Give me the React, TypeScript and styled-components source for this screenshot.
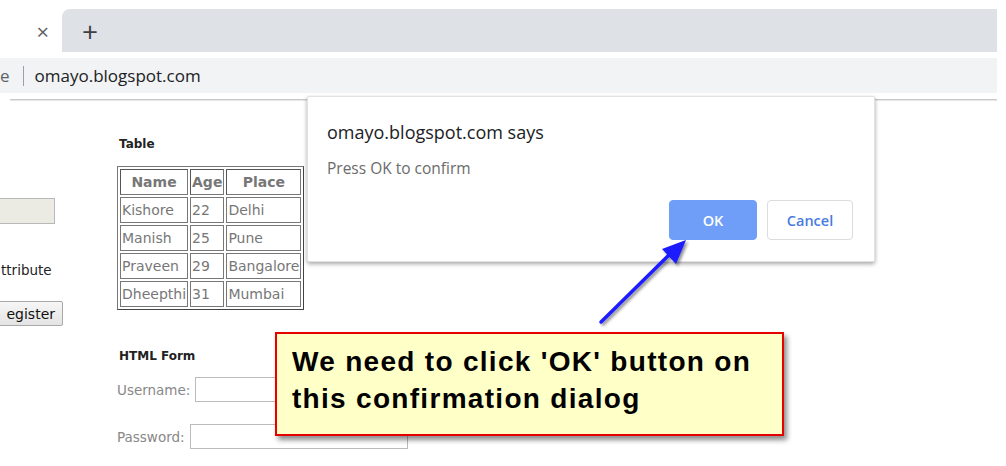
import React from "react";
import styled, { createGlobalStyle } from "styled-components";

const GlobalStyle = createGlobalStyle`
  html, body { margin: 0; padding: 0; background: #ffffff; }
  body { width: 1006px; height: 466px; overflow: hidden; }
`;

const Window = styled.div`
  position: relative;
  width: 1006px;
  height: 466px;
  overflow: hidden;
  background: #fff;
  font-family: "Open Sans", "Noto Sans", sans-serif;
`;

const TabStrip = styled.div`
  display: flex;
  height: 43px;
  margin: 9px 9px 0 0;
`;

const ActiveTab = styled.div`
  width: 62px;
  background: #fff;
  display: flex;
  align-items: center;
  justify-content: flex-end;
  padding-right: 13px;
  box-sizing: border-box;
  color: #5f6368;
  font-size: 22px;
`;

const TabRest = styled.div`
  flex: 1;
  background: #dee1e6;
  border-radius: 8px 0 0 0;
  display: flex;
  align-items: center;
  padding-left: 20px;
  color: #3c4043;
  font-size: 28px;
  font-weight: 400;
`;

const AddressBar = styled.div`
  height: 35px;
  margin: 6px 9px 0 0;
  background: #f1f3f4;
  display: flex;
  align-items: center;
  font-size: 17px;
  color: #202124;
`;

const SecureHint = styled.span`
  color: #5f6368;
`;

const Divider = styled.span`
  width: 1px;
  height: 20px;
  background: #9aa0a6;
  margin: 0 11px 0 13px;
`;

const Separator = styled.div`
  height: 0;
  margin: 6px 9px 0 10px;
  border-top: 1px solid #c9c9c9;
  border-bottom: 1px solid #e6e6e6;
`;

const Page = styled.div`
  display: flex;
  font-family: "DejaVu Sans", Verdana, sans-serif;
  color: #333;
`;

const LeftCol = styled.div`
  width: 117px;
  display: flex;
  flex-direction: column;
  align-items: flex-start;
  padding-top: 97px;
`;

const DisabledInput = styled.div`
  width: 62px;
  height: 26px;
  margin-left: -7px;
  background: #ebebe4;
  border: 1px solid #b8b8b8;
  box-sizing: border-box;
`;

const AttrLabel = styled.div`
  margin-top: 38px;
  margin-left: 1px;
  font-size: 13.5px;
  color: #222;
`;

const RegisterButton = styled.div`
  margin-top: 23px;
  margin-left: -16px;
  width: 79px;
  height: 25px;
  box-sizing: border-box;
  border: 1px solid #a9a9a9;
  border-radius: 2px;
  background: linear-gradient(#f6f6f6, #e4e4e4);
  font-size: 14px;
  color: #111;
  display: flex;
  align-items: center;
  justify-content: flex-end;
  padding-right: 7px;
  font-family: "DejaVu Sans", sans-serif;
`;

const MainCol = styled.div`
  display: flex;
  flex-direction: column;
  align-items: flex-start;
`;

const Heading = styled.div`
  font-size: 12px;
  font-weight: bold;
  color: #222;
  margin-left: 2px;
  line-height: 14px;
`;

const TableHeading = styled(Heading)`
  margin-top: 36px;
`;

const FormHeading = styled(Heading)`
  margin-top: 39px;
`;

const DataTable = styled.table`
  margin-top: 15px;
  border: 1px solid #777;
  border-right-color: #444;
  border-bottom-color: #444;
  border-spacing: 2px;
  font-size: 14px;
  color: #666;
`;

const Th = styled.th`
  border: 1px solid #777;
  border-left-color: #555;
  border-top-color: #555;
  height: 24px;
  padding: 0 1px;
  font-weight: bold;
  color: #777;
  text-align: center;
`;

const Td = styled.td`
  border: 1px solid #777;
  height: 24px;
  padding: 0 1px;
  text-align: left;
  color: #777;
`;

const FieldRow = styled.div<{ $top: number }>`
  display: flex;
  align-items: center;
  gap: 5px;
  margin-top: ${(p) => p.$top}px;
  font-size: 13.5px;
  color: #888;
`;

const TextBox = styled.div<{ $w: number }>`
  width: ${(p) => p.$w}px;
  height: 25px;
  border: 1px solid #bbb;
  box-sizing: border-box;
  background: #fff;
`;

const Dialog = styled.div`
  position: absolute;
  left: 307px;
  top: 96px;
  width: 568px;
  height: 166px;
  box-sizing: border-box;
  background: #fff;
  border: 1px solid #e2e2e2;
  border-radius: 2px;
  box-shadow: 0 2px 4px rgba(0, 0, 0, 0.35);
  padding: 24px 20px 0 19px;
  font-family: "Open Sans", "Noto Sans", sans-serif;
  display: flex;
  flex-direction: column;
`;

const DialogTitle = styled.div`
  font-size: 18px;
  color: #202124;
  line-height: 22px;
`;

const DialogMessage = styled.div`
  font-size: 15.5px;
  color: #6b6b6b;
  margin-top: 15px;
  line-height: 20px;
`;

const ButtonRow = styled.div`
  display: flex;
  justify-content: flex-end;
  gap: 10px;
  margin-top: 22px;
  margin-right: 1px;
`;

const DialogButton = styled.div<{ $primary?: boolean }>`
  width: ${(p) => (p.$primary ? 88 : 86)}px;
  height: 40px;
  box-sizing: border-box;
  border-radius: 4px;
  display: flex;
  align-items: center;
  justify-content: center;
  font-size: 14.5px;
  font-weight: 600;
  background: ${(p) => (p.$primary ? "#6e9ef7" : "#ffffff")};
  color: ${(p) => (p.$primary ? "#ffffff" : "#4a7be0")};
  border: 1px solid ${(p) => (p.$primary ? "#6e9ef7" : "#dadce0")};
`;

const Callout = styled.div`
  position: absolute;
  left: 275px;
  top: 332px;
  width: 509px;
  height: 104px;
  box-sizing: border-box;
  background: #ffffc8;
  border: 2px solid #e60000;
  box-shadow: 3px 4px 5px rgba(0, 0, 0, 0.45);
  padding: 9px 0 0 15px;
  font-family: "Liberation Sans", Arial, sans-serif;
  font-weight: bold;
  font-size: 28px;
  letter-spacing: 1.3px;
  line-height: 37px;
  color: #000;
`;

const ArrowSvg = styled.svg`
  position: absolute;
  left: 590px;
  top: 230px;
  overflow: visible;
`;

export default function App() {
  return (
    <Window>
      <GlobalStyle />
      <TabStrip>
        <ActiveTab>×</ActiveTab>
        <TabRest>+</TabRest>
      </TabStrip>
      <AddressBar>
        <SecureHint>e</SecureHint>
        <Divider />
        omayo.blogspot.com
      </AddressBar>
      <Separator />
      <Page>
        <LeftCol>
          <DisabledInput />
          <AttrLabel>ttribute</AttrLabel>
          <RegisterButton>egister</RegisterButton>
        </LeftCol>
        <MainCol>
          <TableHeading>Table</TableHeading>
          <DataTable>
            <thead>
              <tr>
                <Th>Name</Th>
                <Th>Age</Th>
                <Th>Place</Th>
              </tr>
            </thead>
            <tbody>
              {[
                ["Kishore", "22", "Delhi"],
                ["Manish", "25", "Pune"],
                ["Praveen", "29", "Bangalore"],
                ["Dheepthi", "31", "Mumbai"],
              ].map((r) => (
                <tr key={r[0]}>
                  <Td>{r[0]}</Td>
                  <Td>{r[1]}</Td>
                  <Td>{r[2]}</Td>
                </tr>
              ))}
            </tbody>
          </DataTable>
          <FormHeading>HTML Form</FormHeading>
          <FieldRow $top={14}>
            Username:
            <TextBox $w={214} />
          </FieldRow>
          <FieldRow $top={22}>
            Password:
            <TextBox $w={218} />
          </FieldRow>
        </MainCol>
      </Page>

      <Dialog>
        <DialogTitle>omayo.blogspot.com says</DialogTitle>
        <DialogMessage>Press OK to confirm</DialogMessage>
        <ButtonRow>
          <DialogButton $primary>OK</DialogButton>
          <DialogButton>Cancel</DialogButton>
        </ButtonRow>
      </Dialog>

      <ArrowSvg width="110" height="100" viewBox="0 0 110 100">
        <defs>
          <filter id="ash" x="-20%" y="-20%" width="150%" height="150%">
            <feDropShadow dx="2" dy="2" stdDeviation="1.5" floodColor="#000" floodOpacity="0.45" />
          </filter>
        </defs>
        <g filter="url(#ash)">
          <line x1="11" y1="92" x2="80" y2="24" stroke="#1a1aff" strokeWidth="3.5" strokeLinecap="round" />
          <polygon points="96,10 72,19 86,34" fill="#1a1aff" />
        </g>
      </ArrowSvg>

      <Callout>
        We need to click 'OK' button on
        <br />
        this confirmation dialog
      </Callout>
    </Window>
  );
}
